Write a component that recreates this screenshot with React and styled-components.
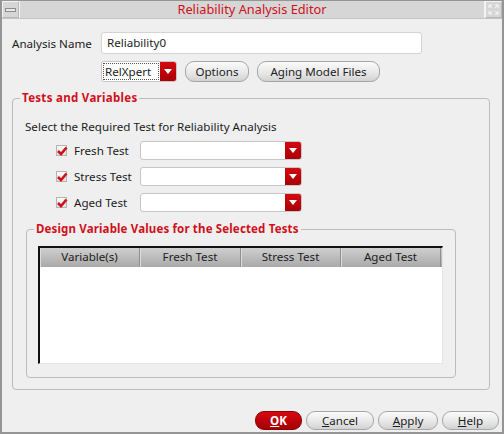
import React from "react";
import styled, { createGlobalStyle } from "styled-components";

const Global = createGlobalStyle`
  html, body { margin: 0; padding: 0; background: #efefef; }
  body { font-family: "Noto Sans", "DejaVu Sans", sans-serif; font-size: 11.6px; color: #1c1c1c; }
  * { box-sizing: border-box; }
`;

const Window = styled.div`
  width: 504px;
  height: 434px;
  border: 2px solid #959595;
  border-top-width: 1px;
  background: #efefef;
  display: flex;
  flex-direction: column;
`;

const TitleBar = styled.div`
  height: 18px;
  display: flex;
  background: #d6d6d6;
  border-bottom: 1px solid #c4c4c4;
`;

const TitleButton = styled.div`
  width: 17px;
  height: 17px;
  border: 1px solid #f4f4f4;
  border-right-color: #b8b8b8;
  border-bottom-color: #b8b8b8;
  display: flex;
  align-items: center;
  justify-content: center;
  flex: none;
`;

const TitleText = styled.div`
  flex: 1;
  text-align: center;
  color: #d0101a;
  font-size: 12.8px;
  line-height: 17px;
  border-left: 1px solid #f4f4f4;
  border-right: 1px solid #f4f4f4;
`;

const Body = styled.div`
  flex: 1;
  display: flex;
  flex-direction: column;
  padding: 13px 12px 0 10px;
`;

const NameRow = styled.div`
  display: flex;
  align-items: center;
  height: 22px;
`;

const Label = styled.span`
  width: 89px;
  flex: none;
`;

const TextInput = styled.div`
  width: 321px;
  height: 22px;
  background: #fff;
  border: 1px solid #d4d4d4;
  border-radius: 3px;
  padding: 0 5px;
  line-height: 20px;
`;

const ToolRow = styled.div`
  display: flex;
  gap: 8px;
  margin: 7px 0 0 89px;
  height: 21px;
`;

const Combo = styled.div`
  width: ${(p) => p.$w}px;
  height: ${(p) => p.$h || 19}px;
  display: flex;
  background: #fff;
  border: 1px solid #c6c6c6;
  border-radius: 3px;
  overflow: hidden;
  flex: none;
`;

const ComboField = styled.div`
  flex: 1;
  display: flex;
  align-items: center;
  padding: 1px;
`;

const Focus = styled.div`
  flex: 1;
  height: 100%;
  border: 1px dotted #555;
  padding-left: 1px;
  line-height: 15px;
`;

const ComboArrow = styled.div`
  width: 16px;
  flex: none;
  background: linear-gradient(#d40a10, #a80006);
  display: flex;
  align-items: center;
  justify-content: center;
`;

const Button = styled.div`
  width: ${(p) => p.$w}px;
  height: ${(p) => p.$h || 21}px;
  border: 1px solid ${(p) => (p.$primary ? "#8a0000" : "#a6a6a6")};
  border-radius: 9px;
  background: ${(p) =>
    p.$primary
      ? "linear-gradient(#d60a10, #a50005)"
      : "linear-gradient(#fbfbfb, #e6e6e6 60%, #d2d2d2)"};
  color: ${(p) => (p.$primary ? "#fff" : "#1c1c1c")};
  font-weight: ${(p) => (p.$primary ? "bold" : "normal")};
  display: flex;
  align-items: center;
  justify-content: center;
  line-height: 1;
  flex: none;
`;

const Group = styled.fieldset`
  margin: 0;
  padding: 0;
  border: 1px solid #bcbcbc;
  border-radius: 4px;
  height: ${(p) => p.$h}px;
  width: ${(p) => p.$w}px;
  display: flex;
  flex-direction: column;
  flex: none;
`;

const OuterGroup = styled(Group)`
  margin-top: 9px;
`;

const InnerGroup = styled(Group)`
  margin: 10px 0 0 13px;
`;

const Legend = styled.legend`
  color: #d0101a;
  font-weight: bold;
  font-size: 11.5px;
  padding: 0 2px;
  margin-left: 7px;
  line-height: 14px;
  letter-spacing: ${(p) => p.$ls || 0.3}px;
`;

const Hint = styled.div`
  margin: 14px 0 0 12px;
`;

const TestList = styled.div`
  display: flex;
  flex-direction: column;
  gap: 7px;
  margin: 7px 0 0 43px;
`;

const TestRow = styled.div`
  display: flex;
  align-items: center;
  height: 19px;
`;

const Check = styled.span`
  width: 11px;
  height: 11px;
  border: 1px solid #b4b4b4;
  background: linear-gradient(#fafafa, #e2e2e2);
  position: relative;
  flex: none;
  margin-right: 7px;
`;

const CheckMark = styled.svg`
  position: absolute;
  left: -1px;
  top: -1px;
`;

const TestLabel = styled.span`
  width: 66px;
`;

const Table = styled.div`
  margin: 10px 0 0 11px;
  width: 405px;
  height: 118px;
  flex: none;
  background: #fff;
  border-left: 2px solid #111;
  border-top: 2px solid #111;
  border-right: 1px solid #e4e4e4;
  border-bottom: 1px solid #e4e4e4;
`;

const HeaderRow = styled.div`
  display: grid;
  grid-template-columns: 100px 101px 100px 100px;
  height: 19px;
  background: linear-gradient(#cfcfcf, #a9a9a9);
`;

const HeaderCell = styled.div`
  text-align: center;
  line-height: 18px;
  border-right: 1px solid #8f8f8f;
  box-shadow: inset 1px 0 0 #dcdcdc;
`;

const Footer = styled.div`
  display: flex;
  justify-content: flex-end;
  gap: 4px;
  margin-top: 21px;
  margin-right: -9px;
`;

const U = styled.span`
  text-decoration: underline;
`;

const Arrow = () => (
  <svg width="8" height="5" viewBox="0 0 8 5">
    <path d="M0 0 H8 L4 5 Z" fill="#fff" />
  </svg>
);

const TestItem = ({ label }) => (
  <TestRow>
    <Check>
      <CheckMark width="12" height="12" viewBox="0 0 12 12">
        <path d="M2 6 L5 9 L10.5 2.5" stroke="#d0101a" strokeWidth="2.6" fill="none" />
      </CheckMark>
    </Check>
    <TestLabel>{label}</TestLabel>
    <Combo $w={162} $h={19}>
      <ComboField />
      <ComboArrow>
        <Arrow />
      </ComboArrow>
    </Combo>
  </TestRow>
);

export default function App() {
  return (
    <>
      <Global />
      <Window>
        <TitleBar>
          <TitleButton>
            <svg width="11" height="4" viewBox="0 0 11 4">
              <rect x="0.5" y="0.5" width="10" height="3" fill="#e8e8e8" stroke="#8c8c8c" />
            </svg>
          </TitleButton>
          <TitleText>Reliability Analysis Editor</TitleText>
          <TitleButton>
            <svg width="11" height="11" viewBox="0 0 11 11">
              <path d="M1 1 L4 4 M10 1 L7 4 M1 10 L4 7 M10 10 L7 7 M1 1 h3 M1 1 v3 M10 1 h-3 M10 1 v3 M1 10 h3 M1 10 v-3 M10 10 h-3 M10 10 v-3" stroke="#f8f8f8" strokeWidth="1" fill="none" />
            </svg>
          </TitleButton>
        </TitleBar>
        <Body>
          <NameRow>
            <Label>Analysis Name</Label>
            <TextInput>Reliability0</TextInput>
          </NameRow>
          <ToolRow>
            <Combo $w={76} $h={21}>
              <ComboField>
                <Focus>RelXpert</Focus>
              </ComboField>
              <ComboArrow>
                <Arrow />
              </ComboArrow>
            </Combo>
            <Button $w={64}>Options</Button>
            <Button $w={123}>Aging Model Files</Button>
          </ToolRow>
          <OuterGroup $w={478} $h={299}>
            <Legend>Tests and Variables</Legend>
            <Hint>Select the Required Test for Reliability Analysis</Hint>
            <TestList>
              <TestItem label="Fresh Test" />
              <TestItem label="Stress Test" />
              <TestItem label="Aged Test" />
            </TestList>
            <InnerGroup $w={430} $h={156}>
              <Legend $ls={0.15}>Design Variable Values for the Selected Tests</Legend>
              <Table>
                <HeaderRow>
                  <HeaderCell>Variable(s)</HeaderCell>
                  <HeaderCell>Fresh Test</HeaderCell>
                  <HeaderCell>Stress Test</HeaderCell>
                  <HeaderCell>Aged Test</HeaderCell>
                </HeaderRow>
              </Table>
            </InnerGroup>
          </OuterGroup>
          <Footer>
            <Button $w={47} $h={19} $primary>
              <U>O</U>K
            </Button>
            <Button $w={68} $h={19}>
              <U>C</U>ancel
            </Button>
            <Button $w={60} $h={19}>
              <U>A</U>pply
            </Button>
            <Button $w={57} $h={19}>
              <U>H</U>elp
            </Button>
          </Footer>
        </Body>
      </Window>
    </>
  );
}
